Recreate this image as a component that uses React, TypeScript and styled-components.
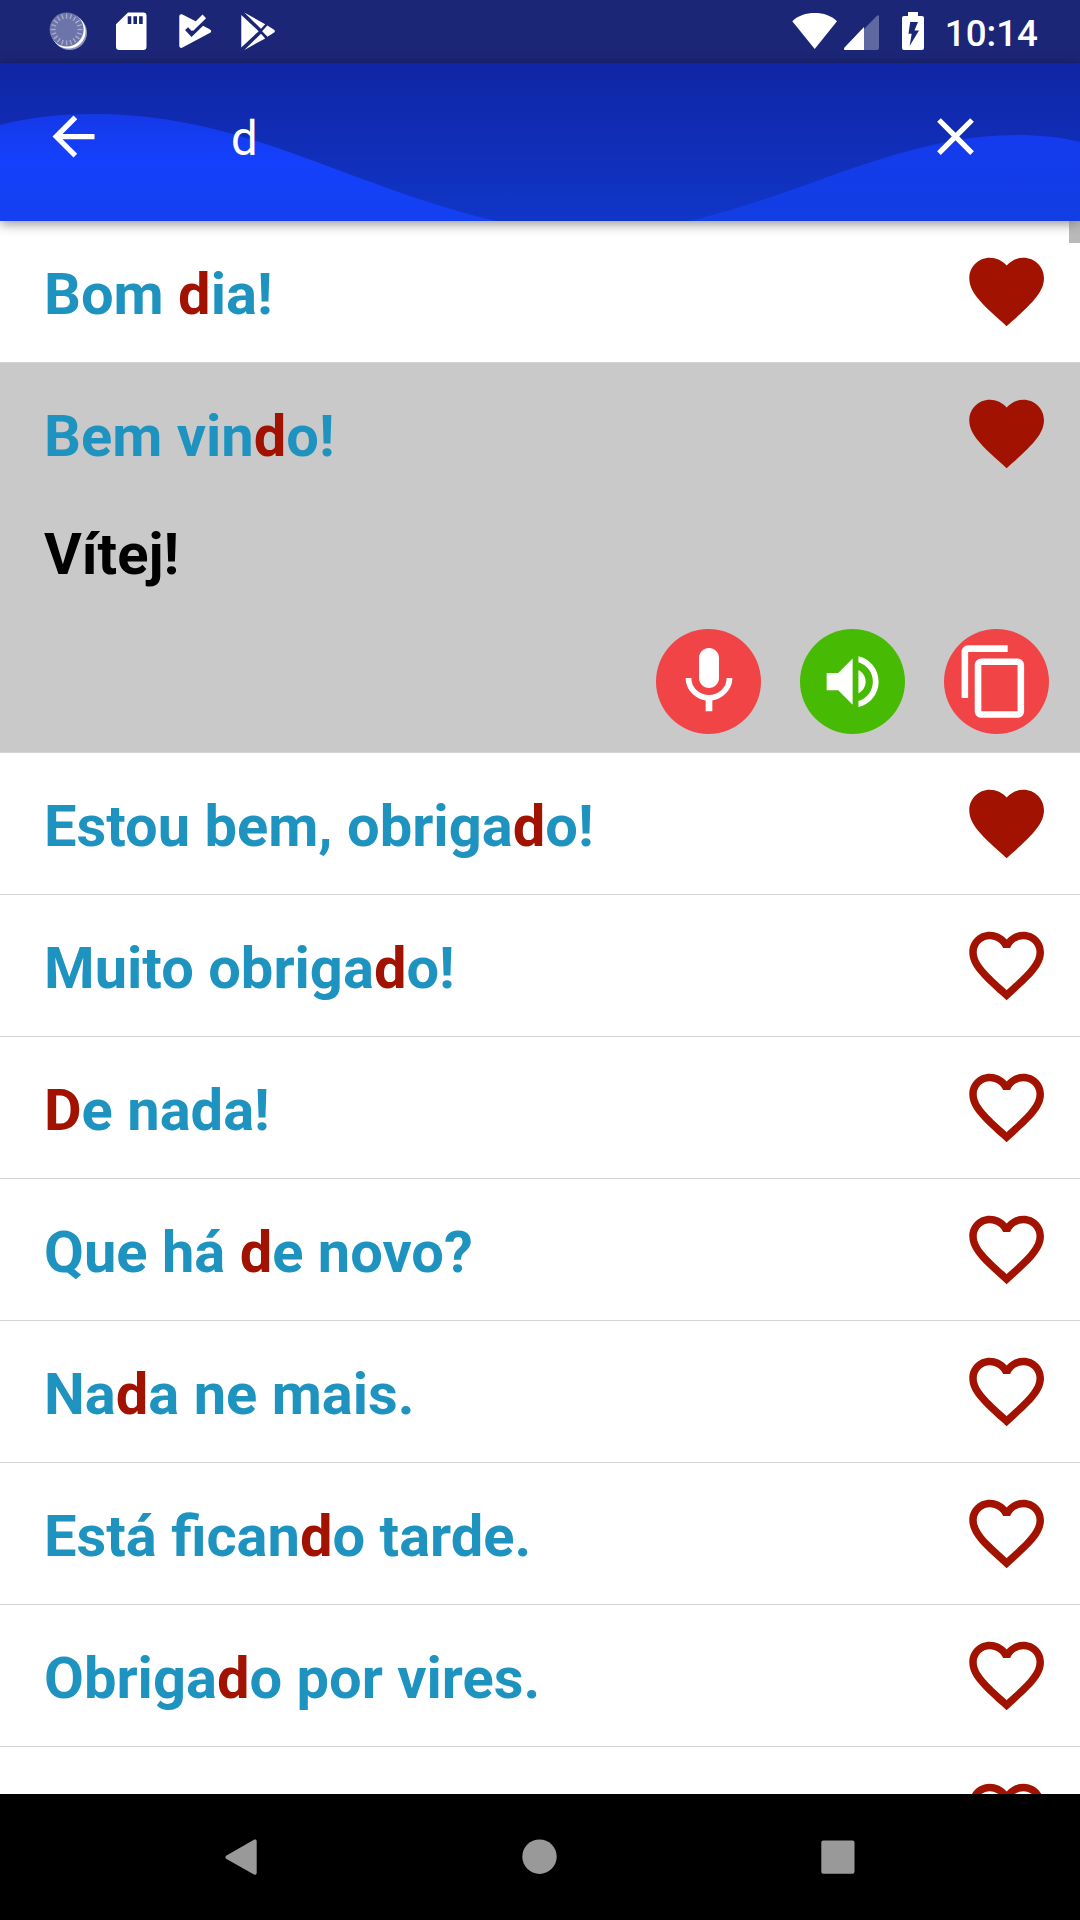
import React from "react";
import styled, { createGlobalStyle } from "styled-components";

const GlobalStyle = createGlobalStyle`
  *, *::before, *::after { box-sizing: border-box; }
  html, body { margin: 0; padding: 0; background: #fff; }
  body { font-family: Roboto, "Noto Sans", sans-serif; }
  button { border: 0; padding: 0; background: none; font: inherit; }
  svg { display: block; flex: none; }
`;

const Screen = styled.div`
  display: flex;
  flex-direction: column;
  width: 1080px;
  height: 1920px;
  overflow: hidden;
  background: #fff;
`;

const StatusBar = styled.div`
  flex: none;
  display: flex;
  justify-content: space-between;
  height: 63px;
  padding: 0 42px 0 37px;
  background: #1b2676;
`;

const Notifications = styled.div`
  display: flex;
`;

const SystemIcons = styled.div`
  display: flex;
  align-items: flex-start;
`;

const Clock = styled.span`
  margin-left: 21px;
  padding-top: 12px;
  font-size: 36.75px;
  font-weight: 500;
  line-height: 43px;
  color: #fff;
`;

const AppBar = styled.header`
  position: relative;
  z-index: 1;
  flex: none;
  display: flex;
  align-items: center;
  height: 158px;
  padding: 0 93px 11px 42px;
  background: linear-gradient(#1025a5, #1036c8);
  box-shadow: 0 3px 11px rgba(0, 0, 0, 0.42);
`;

const Waves = styled.svg`
  position: absolute;
  inset: 0;
`;

const IconButton = styled.button`
  position: relative;
  width: 63px;
  height: 63px;
  color: #fff;
`;

const Query = styled.div`
  position: relative;
  flex: 1;
  padding: 4px 0 0 126px;
  font-size: 47.25px;
  line-height: 56px;
  color: #fff;
`;

const List = styled.main`
  position: relative;
  flex: 1;
  min-height: 0;
  overflow: hidden;
`;

const ScrollThumb = styled.div`
  position: absolute;
  top: 0;
  right: 0;
  z-index: 2;
  width: 11px;
  height: 22px;
  background: rgba(128, 128, 128, 0.55);
`;

const Item = styled.section<{ $open?: boolean }>`
  border-bottom: 1px solid #d3d3d3;
  background: ${(p) => (p.$open ? "#c9c9c9" : "#fff")};
`;

const ItemHead = styled.div`
  display: flex;
  align-items: center;
  justify-content: space-between;
  height: 141px;
  padding: 0 28px 0 44px;
`;

const Phrase = styled.div`
  padding-top: 4px;
  font-size: 57.85px;
  font-weight: 700;
  line-height: 68px;
  white-space: pre;
  color: #1f93bf;
`;

const Match = styled.span`
  color: #a11300;
`;

const Translation = styled.div`
  margin-top: 16px;
  padding-left: 44px;
  font-size: 57.9px;
  font-weight: 700;
  line-height: 68px;
  color: #000;
`;

const Actions = styled.div`
  display: flex;
  justify-content: flex-end;
  gap: 39px;
  padding: 41px 31px 18px 0;
`;

const RoundButton = styled.button<{ $color: string }>`
  display: flex;
  align-items: center;
  justify-content: center;
  width: 105px;
  height: 105px;
  border-radius: 50%;
  color: #fff;
  background: ${(p) => p.$color};
`;

const Glyph = styled.svg<{ $right?: number; $bottom?: number }>`
  margin: 0 ${(p) => p.$right ?? 0}px ${(p) => p.$bottom ?? 0}px 0;
`;

const HeartIcon = styled.svg`
  margin-bottom: 1px;
  fill: #a11300;
`;

const NavBar = styled.nav`
  flex: none;
  display: flex;
  align-items: center;
  justify-content: space-between;
  height: 126px;
  padding: 0 211px;
  background: #000;
`;

const FILLED =
  "M12 21.35l-1.45-1.32C5.4 15.36 2 12.28 2 8.5 2 5.42 4.42 3 7.5 3c1.74 0 3.41.81 4.5 2.09C13.09 3.81 14.76 3 16.5 3 19.58 3 22 5.42 22 8.5c0 3.78-3.4 6.86-8.55 11.54L12 21.35z";
const OUTLINE =
  "M16.5 3c-1.74 0-3.41.81-4.5 2.09C10.91 3.81 9.24 3 7.5 3 4.42 3 2 5.42 2 8.5c0 3.78 3.4 6.86 8.55 11.54L12 21.35l1.45-1.32C18.6 15.36 22 12.28 22 8.5 22 5.42 19.58 3 16.5 3zm-4.4 15.55l-.1.1-.1-.1C7.14 14.24 4 11.39 4 8.5 4 6.5 5.5 5 7.5 5c1.54 0 3.04.99 3.57 2.36h1.87C13.46 5.99 14.96 5 16.5 5c2 0 3.5 1.5 3.5 3.5 0 2.89-3.14 5.74-7.9 10.05z";

const Heart = ({ filled }: { filled?: boolean }) => (
  <HeartIcon width="90" height="90" viewBox="0.05 -0.13 24.1 24.1">
    <path d={filled ? FILLED : OUTLINE} />
  </HeartIcon>
);

const Highlighted = ({ text, query }: { text: string; query: string }) => {
  const at = text.toLowerCase().indexOf(query);
  if (at < 0) return <Phrase>{text}</Phrase>;
  return (
    <Phrase>
      {text.slice(0, at)}
      <Match>{text.slice(at, at + query.length)}</Match>
      {text.slice(at + query.length)}
    </Phrase>
  );
};

type Entry = { text: string; favorite?: boolean; translation?: string };

const entries: Entry[] = [
  { text: "Bom dia!", favorite: true },
  { text: "Bem vindo!", favorite: true, translation: "Vítej!" },
  { text: "Estou bem, obrigado!", favorite: true },
  { text: "Muito obrigado!" },
  { text: "De nada!" },
  { text: "Que há de novo?" },
  { text: "Nada ne mais." },
  { text: "Está ficando tarde." },
  { text: "Obrigado por vires." },
  { text: "" },
];

const ticks = Array.from({ length: 20 }, (_, i) => i * 18);

export default function App() {
  const query = "d";
  return (
    <>
      <GlobalStyle />
      <Screen>
        <StatusBar>
          <Notifications>
            <svg width="63" height="63" viewBox="0 0 63 63">
              <circle cx="32.7" cy="32.7" r="17.3" fill="#8d93bd" />
              <circle cx="31.3" cy="31.3" r="17.3" fill="#fff" />
              <circle cx="29.6" cy="29.5" r="17" fill="#6d74a9" />
              {ticks.map((a) => (
                <path
                  key={a}
                  d="M29.6 13.6v5"
                  stroke="#a6abcb"
                  strokeWidth="1.4"
                  transform={`rotate(${a} 29.6 29.5)`}
                />
              ))}
            </svg>
            <svg width="63" height="63" viewBox="0 0 63 63">
              <path
                fill="#fff"
                fillRule="evenodd"
                d="M28 12.5h15.3a3.2 3.2 0 0 1 3.2 3.2v31a3.2 3.2 0 0 1-3.2 3.2H19.2a3.2 3.2 0 0 1-3.2-3.2V24.2zM27.7 16.3v7.8h3.6v-7.8zM33.4 16.3v7.8h3.6v-7.8zM39.1 16.3v7.8h3.6v-7.8z"
              />
            </svg>
            <svg width="63" height="63" viewBox="0 0 63 63">
              <path
                fill="#fff"
                d="M16.3 16.4c0-1.8 1.6-2.6 3.2-1.8L35 22.5l5.5 3.6 6.2 3.1c2 1 2 2.8 0 3.8L19.5 47.6c-1.6.8-3.2 0-3.2-1.8z"
              />
              <path d="M23.6 28.6l5 5.4L43.5 19.5" fill="none" stroke="#1b2676" strokeWidth="4.2" />
              <path d="M28.3 29.2L41.3 16.4" stroke="#fff" strokeWidth="5" />
            </svg>
            <svg width="63" height="63" viewBox="0 0 63 63">
              <path
                fill="#fff"
                d="M15.3 15L32.7 31.2 15.3 47.4zM18.3 12.6L39.2 24.2 35 28.7zM18.3 50L39.2 38.4 35 33.7zM41.3 25.6l6.8 4.2c1 .7 1 2.1 0 2.8l-6.6 4.2-5.4-5.6z"
              />
            </svg>
          </Notifications>
          <SystemIcons>
            <svg width="52" height="63" viewBox="0 0 52 63">
              <path d="M22.7 49L.3 21.2C6 15.6 14 13 22.7 13S39.2 15.6 45 21.2z" fill="#fff" />
            </svg>
            <svg width="58" height="63" viewBox="0 0 58 63">
              <path d="M20 29L33 15.8c1-1 2-.5 2 .8V48a2 2 0 0 1-2 2H20z" fill="#5f68a0" />
              <path d="M20 27v23H1.5C0 50-.5 49 .5 47.6z" fill="#fff" />
            </svg>
            <svg width="22" height="63" viewBox="0 0 22 63">
              <path
                fill="#fff"
                fillRule="evenodd"
                d="M6 12h10v4h4a2 2 0 0 1 2 2v30a2 2 0 0 1-2 2H2a2 2 0 0 1-2-2V18a2 2 0 0 1 2-2h4zM8.2 22L6.5 33.7h3.2L7.6 46 17 30.6h-4.6L16 22z"
              />
            </svg>
            <Clock>10:14</Clock>
          </SystemIcons>
        </StatusBar>

        <AppBar>
          <Waves width="1080" height="158" viewBox="0 0 1080 158">
            <defs>
              <linearGradient id="left" x1="0" y1="51" x2="0" y2="158" gradientUnits="userSpaceOnUse">
                <stop offset="0" stopColor="#1439e8" />
                <stop offset="0.45" stopColor="#1540fc" />
                <stop offset="1" stopColor="#1440f0" />
              </linearGradient>
              <linearGradient id="right" x1="0" y1="72" x2="0" y2="158" gradientUnits="userSpaceOnUse">
                <stop offset="0" stopColor="#143bee" />
                <stop offset="1" stopColor="#123ee2" />
              </linearGradient>
            </defs>
            <path
              fill="url(#left)"
              d="M0 62C30 54 62 51 95 51C145 51 190 59 233 71C320 96 400 136 496 158H0z"
            />
            <path
              fill="url(#right)"
              d="M691 158C760 140 810 120 853 105C910 86 960 72 1017 72C1040 72 1060 74 1080 79V158z"
            />
          </Waves>
          <IconButton aria-label="Back">
            <svg width="63" height="63" viewBox="0 0 24 24" fill="currentColor">
              <path d="M20 11H7.83l5.59-5.59L12 4l-8 8 8 8 1.41-1.41L7.83 13H20v-2z" />
            </svg>
          </IconButton>
          <Query>{query}</Query>
          <IconButton aria-label="Clear">
            <svg width="63" height="63" viewBox="0 0 24 24" fill="currentColor">
              <path d="M19 6.41L17.59 5 12 10.59 6.41 5 5 6.41 10.59 12 5 17.59 6.41 19 12 13.41 17.59 19 19 17.59 13.41 12z" />
            </svg>
          </IconButton>
        </AppBar>

        <List>
          <ScrollThumb />
          {entries.map((e, i) => (
            <Item key={i} $open={!!e.translation}>
              <ItemHead>
                <Highlighted text={e.text} query={query} />
                <Heart filled={e.favorite} />
              </ItemHead>
              {e.translation && (
                <>
                  <Translation>{e.translation}</Translation>
                  <Actions>
                    <RoundButton $color="#f04447" aria-label="Record">
                      <Glyph $bottom={7} width="80" height="80" viewBox="0 0 24 24" fill="currentColor">
                        <path d="M12 15c1.66 0 2.99-1.34 2.99-3L15 6c0-1.66-1.34-3-3-3S9 4.34 9 6v6c0 1.66 1.34 3 3 3zm5.3-3c0 3-2.54 5.1-5.3 5.1S6.7 15 6.7 12H5c0 3.42 2.72 6.23 6 6.72V22h2v-3.28c3.28-.48 6-3.3 6-6.72h-1.7z" />
                      </Glyph>
                    </RoundButton>
                    <RoundButton $color="#47ba04" aria-label="Listen">
                      <Glyph width="69.3" height="69.3" viewBox="0 0 24 24" fill="currentColor">
                        <path d="M3 9v6h4l5 5V4L7 9H3zm13.5 3c0-1.77-1.02-3.29-2.5-4.03v8.05c1.48-.73 2.5-2.25 2.5-4.02zM14 3.23v2.06c2.89.86 5 3.54 5 6.71s-2.11 5.85-5 6.71v2.06c4.01-.91 7-4.49 7-8.77s-2.99-7.86-7-8.77z" />
                      </Glyph>
                    </RoundButton>
                    <RoundButton $color="#f04447" aria-label="Copy">
                      <Glyph $right={5} width="79" height="79" viewBox="0 0 24 24" fill="currentColor">
                        <path d="M16 1H4c-1.1 0-2 .9-2 2v14h2V3h12V1zm3 4H8c-1.1 0-2 .9-2 2v14c0 1.1.9 2 2 2h11c1.1 0 2-.9 2-2V7c0-1.1-.9-2-2-2zm0 16H8V7h11v14z" />
                      </Glyph>
                    </RoundButton>
                  </Actions>
                </>
              )}
            </Item>
          ))}
        </List>

        <NavBar>
          <svg width="60" height="60" viewBox="0 0 60 60" fill="#999">
            <path d="M15.5 28.4L42.5 13c1.8-1 3.2-.3 3.2 1.3v31.4c0 1.8-1.5 2.6-3.2 1.6L15.5 32c-1.5-1-1.5-2.7 0-3.6z" />
          </svg>
          <svg width="60" height="60" viewBox="0 0 60 60" fill="#999">
            <circle cx="29.5" cy="29.7" r="17.2" />
          </svg>
          <svg width="60" height="60" viewBox="0 0 60 60" fill="#999">
            <rect x="12.3" y="13.5" width="33.2" height="33.2" rx="2" />
          </svg>
        </NavBar>
      </Screen>
    </>
  );
}
